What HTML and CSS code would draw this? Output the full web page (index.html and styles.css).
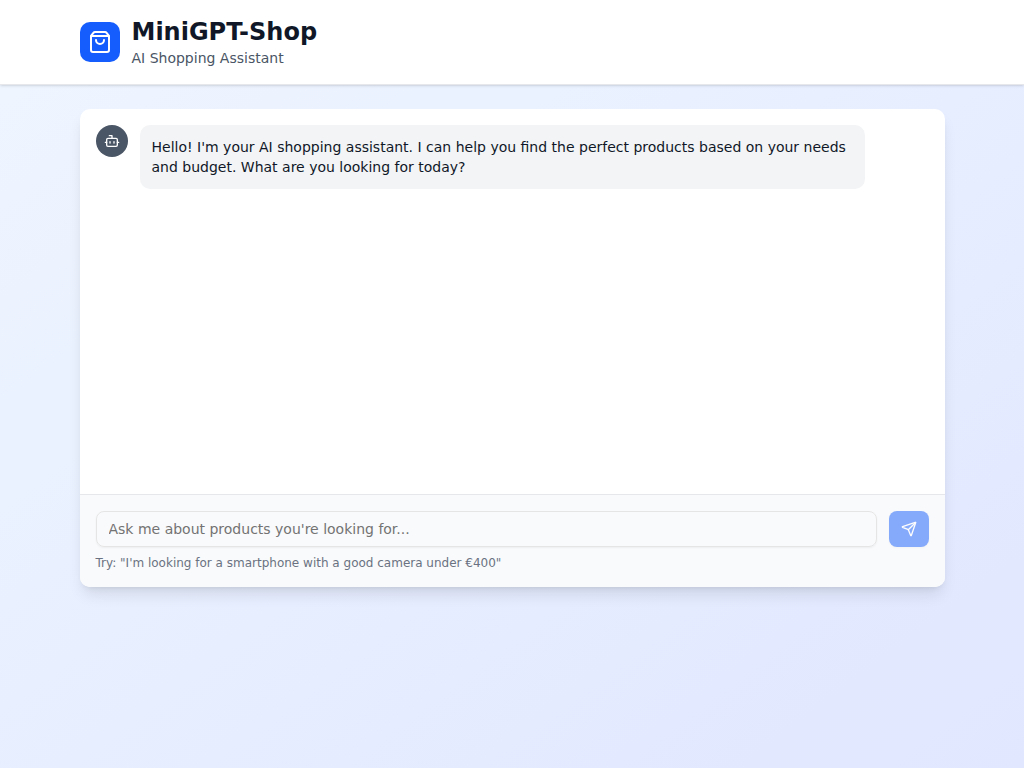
FILE: index.html
```html
<!DOCTYPE html>
<html lang="en">
<head>
<meta charset="utf-8">
<meta name="viewport" content="width=device-width, initial-scale=1">
<title>MiniGPT-Shop</title>
<link rel="stylesheet" href="styles.css">
</head>
<body>
<header class="header">
  <div class="container brand">
    <div class="logo">
      <svg class="icon icon-lg" viewBox="0 0 24 24" aria-hidden="true"><path d="M16 10a4 4 0 0 1-8 0"/><path d="M3.103 6.034h17.794"/><path d="M3.4 5.467a2 2 0 0 0-.4 1.2V20a2 2 0 0 0 2 2h14a2 2 0 0 0 2-2V6.667a2 2 0 0 0-.4-1.2l-2-2.667A2 2 0 0 0 17 2H7a2 2 0 0 0-1.6.8z"/></svg>
    </div>
    <div>
      <h1 class="title">MiniGPT-Shop</h1>
      <p class="subtitle">AI Shopping Assistant</p>
    </div>
  </div>
</header>
<main class="container main">
  <section class="chat">
    <div class="messages">
      <div class="message">
        <div class="avatar">
          <svg class="icon icon-sm" viewBox="0 0 24 24" aria-hidden="true"><path d="M12 8V4H8"/><rect width="16" height="12" x="4" y="8" rx="2"/><path d="M2 14h2"/><path d="M20 14h2"/><path d="M15 13v2"/><path d="M9 13v2"/></svg>
        </div>
        <p class="bubble">Hello! I'm your AI shopping assistant. I can help you find the perfect products based on your needs and budget. What are you looking for today?</p>
      </div>
    </div>
    <form class="composer">
      <div class="composer-row">
        <input class="field" type="text" aria-label="Message" placeholder="Ask me about products you're looking for...">
        <button class="send" type="submit" aria-label="Send" disabled>
          <svg class="icon icon-sm" viewBox="0 0 24 24" aria-hidden="true"><path d="M14.536 21.686a.5.5 0 0 0 .937-.024l6.5-19a.496.496 0 0 0-.635-.635l-19 6.5a.5.5 0 0 0-.024.937l7.93 3.18a2 2 0 0 1 1.112 1.11z"/><path d="m21.854 2.147-10.94 10.939"/></svg>
        </button>
      </div>
      <p class="hint">Try: "I'm looking for a smartphone with a good camera under €400"</p>
    </form>
  </section>
</main>
</body>
</html>
```

FILE: styles.css
```css
*, *::before, *::after {
  box-sizing: border-box;
}

body {
  margin: 0;
  min-height: 100vh;
  background: linear-gradient(to bottom right in oklab, #eff6ff, #e0e7ff) no-repeat;
  color: #101828;
  font-family: "DejaVu Sans", sans-serif;
  font-size: 14px;
  line-height: 20px;
}

h1, p {
  margin: 0;
}

.container {
  max-width: 897px;
  margin: 0 auto;
  padding: 16px;
}

.header {
  background: #fff;
  border-bottom: 1px solid #e5e7eb;
  box-shadow: 0 1px 3px rgba(0, 0, 0, 0.1), 0 1px 2px -1px rgba(0, 0, 0, 0.1);
}

.brand {
  display: flex;
  align-items: center;
  gap: 12px;
}

.logo {
  display: flex;
  padding: 8px;
  border-radius: 10px;
  background: #155dfc;
  color: #fff;
}

.icon {
  display: block;
  fill: none;
  stroke: currentColor;
  stroke-width: 2;
  stroke-linecap: round;
  stroke-linejoin: round;
}

.icon-lg {
  width: 24px;
  height: 24px;
}

.icon-sm {
  width: 16px;
  height: 16px;
}

.title {
  font-size: 24px;
  line-height: 32px;
  font-weight: 700;
}

.subtitle {
  color: #4a5565;
}

.main {
  padding-top: 24px;
  padding-bottom: 24px;
}

.chat {
  overflow: hidden;
  border-radius: 10px;
  background: #fff;
  box-shadow: 0 10px 15px -3px rgba(0, 0, 0, 0.1), 0 4px 6px -4px rgba(0, 0, 0, 0.1);
}

.messages {
  height: 385px;
  padding: 16px;
  overflow-y: auto;
}

.message {
  display: flex;
  align-items: flex-start;
  gap: 12px;
  max-width: 769px;
}

.avatar {
  display: flex;
  flex: none;
  align-items: center;
  justify-content: center;
  width: 32px;
  height: 32px;
  border-radius: 50%;
  background: #4a5565;
  color: #fff;
}

.bubble {
  flex: 1;
  padding: 12px;
  border-radius: 10px;
  background: #f3f4f6;
}

.composer {
  padding: 16px;
  border-top: 1px solid #e5e7eb;
  background: #f9fafb;
}

.composer-row {
  display: flex;
  gap: 12px;
}

.field {
  flex: 1;
  min-width: 0;
  height: 36px;
  padding: 4px 12px;
  border: 1px solid #e5e5e5;
  border-radius: 8px;
  background: transparent;
  color: inherit;
  font: inherit;
  box-shadow: 0 1px 2px rgba(0, 0, 0, 0.05);
}

.field::placeholder {
  color: #737373;
}

.send {
  display: flex;
  align-items: center;
  justify-content: center;
  width: 40px;
  height: 36px;
  padding: 0;
  border: 0;
  border-radius: 8px;
  background: #155dfc;
  color: #fff;
  box-shadow: 0 1px 2px rgba(0, 0, 0, 0.05);
}

.send:disabled {
  opacity: 0.5;
}

.hint {
  margin-top: 8px;
  color: #6a7282;
  font-size: 12px;
  line-height: 16px;
}
```
